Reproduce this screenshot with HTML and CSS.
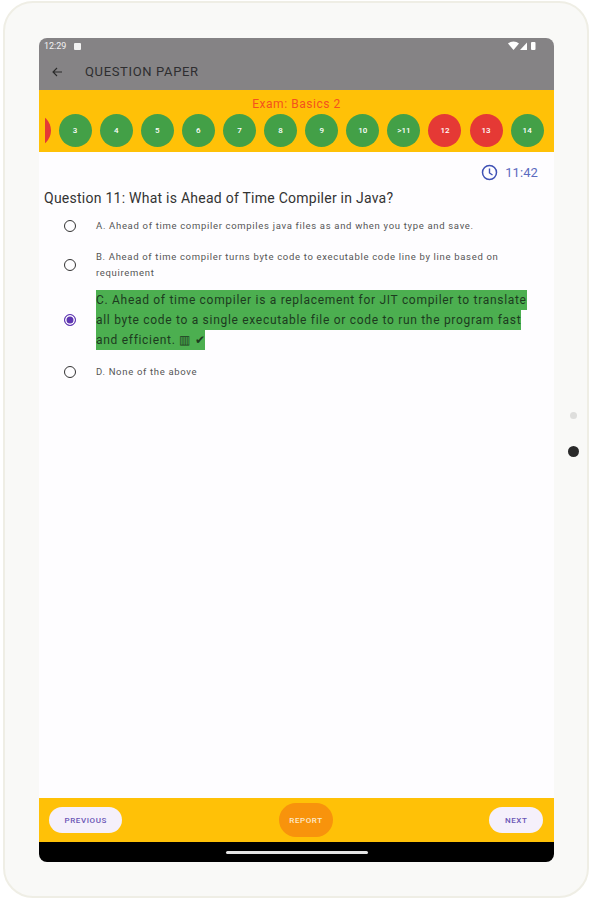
FILE: index.html
```html
<!DOCTYPE html>
<html lang="en">
  <head>
    <meta charset="UTF-8" />
    <meta name="viewport" content="width=device-width, initial-scale=1.0" />
    <title>Question Paper</title>
    <link rel="stylesheet" href="styles.css">
  </head>
  <body>
    <div class="tablet">
      <span class="side-dot light"></span>
      <span class="side-dot dark"></span>

      <div class="screen">
        <!-- App bar with status icons -->
        <div class="appbar">
          <div class="status">
            <div class="status-left">
              <span class="clock">12:29</span>
              <span class="notif"></span>
            </div>
            <svg class="status-icons" width="28" height="10" viewBox="0 0 28 10">
              <path d="M0 2.500C3-.3 8-.3 11 2.500L5.500 9z" fill="#fff" />
              <path d="M12 9L19 1.500V9z" fill="#fff" />
              <rect x="23" y="1" width="4.500" height="8" rx="1" fill="#fff" />
            </svg>
          </div>
          <div class="title-row">
            <svg class="back" width="12" height="12" viewBox="0 0 12 12">
              <path d="M11 6H2M6 2L2 6 6 10" fill="none" stroke="#2a2a2a" stroke-width="1.100" />
            </svg>
            <span class="title">QUESTION PAPER</span>
          </div>
        </div>

        <!-- Exam name and question numbers -->
        <div class="exam-bar">
          <div class="exam-name">Exam: Basics 2</div>
          <div class="numbers">
            <div class="track">
              <span class="num red"></span>
              <span class="num green">3</span>
              <span class="num green">4</span>
              <span class="num green">5</span>
              <span class="num green">6</span>
              <span class="num green">7</span>
              <span class="num green">8</span>
              <span class="num green">9</span>
              <span class="num green">10</span>
              <span class="num green">&gt;11</span>
              <span class="num red">12</span>
              <span class="num red">13</span>
              <span class="num green">14</span>
            </div>
          </div>
        </div>

        <!-- Question -->
        <div class="content">
          <div class="timer">
            <svg width="17" height="17" viewBox="0 0 17 17">
              <circle cx="8.500" cy="8.500" r="7" fill="none" stroke="#3f51b5" stroke-width="1.500" />
              <path d="M8.500 4.500V9l3 2" fill="none" stroke="#3f51b5" stroke-width="1.400" />
            </svg>
            <span>11:42</span>
          </div>
          <div class="question">Question 11: What is Ahead of Time Compiler in Java?</div>
          <div class="options">
            <div class="option one-line">
              <span class="radio"></span>
              <span class="option-text">A. Ahead of time compiler compiles java files as and when you type and save.</span>
            </div>
            <div class="option two-line">
              <span class="radio"></span>
              <span class="option-text">B. Ahead of time compiler turns byte code to executable code line by line based on requirement</span>
            </div>
            <div class="option correct">
              <span class="radio checked"></span>
              <span class="option-text"><mark>C. Ahead of time compiler is a replacement for JIT compiler to translate all byte code to a single executable file or code to run the program fast and efficient. ▥ ✔</mark></span>
            </div>
            <div class="option one-line">
              <span class="radio"></span>
              <span class="option-text">D. None of the above</span>
            </div>
          </div>
        </div>

        <!-- Bottom buttons -->
        <div class="footer">
          <button class="pill">PREVIOUS</button>
          <button class="report">REPORT</button>
          <button class="pill">NEXT</button>
        </div>
        <div class="navbar"><span class="home-bar"></span></div>
      </div>
    </div>
  </body>
</html>
```

FILE: styles.css
```css
* {
  margin: 0;
  padding: 0;
  box-sizing: border-box;
}

body {
  font-family: "Roboto", "Liberation Sans", sans-serif;
  background-color: #fff;
  width: 591px;
  height: 900px;
  padding: 1px 2px 2px 3px;
  overflow: hidden;
}

.tablet {
  position: relative;
  height: 897px;
  padding: 35px 33px 33px 34px;
  background-color: #f9f9f7;
  border: 2px solid #efeee5;
  border-radius: 30px;
}

.side-dot {
  position: absolute;
  border-radius: 50%;
}

.side-dot.light {
  left: 565px;
  top: 409px;
  width: 7px;
  height: 7px;
  background-color: #dededc;
}

.side-dot.dark {
  left: 563px;
  top: 443px;
  width: 11px;
  height: 11px;
  background-color: #2a2a2a;
}

.screen {
  display: flex;
  flex-direction: column;
  height: 824px;
  background-color: #fff;
  border-radius: 8px;
  overflow: hidden;
}

.appbar {
  height: 52px;
  flex-shrink: 0;
  background-color: #858385;
}

.status {
  display: flex;
  justify-content: space-between;
  align-items: center;
  height: 15px;
  padding: 1px 18px 0 5px;
}

.status-left {
  display: flex;
  align-items: center;
  gap: 8px;
}

.clock {
  font-size: 9px;
  color: #f2f2f2;
}

.notif {
  width: 7px;
  height: 7px;
  background-color: #f2f2f2;
  border-radius: 1px;
}

.title-row {
  display: flex;
  align-items: center;
  height: 37px;
  padding-left: 12px;
}

.title {
  margin-left: 22px;
  font-size: 13px;
  letter-spacing: 0.65px;
  color: #2e2e30;
}

.exam-bar {
  height: 62px;
  flex-shrink: 0;
  background-color: #ffc107;
}

.exam-name {
  padding-top: 7px;
  height: 24px;
  text-align: center;
  font-size: 12px;
  letter-spacing: 0.55px;
  color: #f4511e;
}

.numbers {
  margin-left: 6px;
  overflow: hidden;
}

.track {
  display: flex;
  gap: 8.1px;
  margin-left: -27.5px;
}

.num {
  display: flex;
  align-items: center;
  justify-content: center;
  flex-shrink: 0;
  width: 33px;
  height: 33px;
  border-radius: 50%;
  font-size: 8px;
  font-weight: 500;
  color: #fff;
}

.num.green {
  background-color: #43a047;
}

.num.red {
  background-color: #e53935;
}

.content {
  flex: 1;
  background-color: #fefdff;
}

.timer {
  display: flex;
  justify-content: flex-end;
  align-items: center;
  gap: 7px;
  height: 18px;
  margin-top: 11px;
  padding-right: 16px;
  font-size: 13px;
  letter-spacing: 0.1px;
  color: #5c6bc0;
}

.question {
  margin: 8px 0 0 5px;
  font-size: 14px;
  line-height: 18px;
  letter-spacing: 0.25px;
  color: #333;
}

.options {
  margin-top: 6px;
}

.option {
  display: flex;
  align-items: center;
  padding-left: 25px;
}

.option.one-line {
  height: 26px;
}

.option.two-line {
  height: 51px;
}

.option.correct {
  height: 60px;
  margin-bottom: 9px;
}

.radio {
  flex-shrink: 0;
  width: 12px;
  height: 12px;
  border: 1.500px solid #333;
  border-radius: 50%;
  margin-right: 20px;
}

.radio.checked {
  border-color: #5e35b1;
  background-color: #5e35b1;
  box-shadow: inset 0 0 0 1.500px #fff;
}

.option-text {
  width: 434px;
  font-size: 9.5px;
  line-height: 16px;
  letter-spacing: 0.68px;
  color: #555;
}

.correct .option-text {
  font-size: 12px;
  line-height: 20px;
  letter-spacing: 0.7px;
  color: #1d3b1f;
}

mark {
  background-color: #4caf50;
  color: inherit;
  padding: 3px 0;
}

.footer {
  display: flex;
  justify-content: space-between;
  align-items: center;
  height: 44px;
  flex-shrink: 0;
  padding: 0 11px 0 10px;
  background-color: #ffc107;
}

button {
  border: none;
  font-family: inherit;
  font-size: 8px;
  font-weight: 500;
  letter-spacing: 0.6px;
}

.pill {
  height: 26px;
  padding: 0 15.5px;
  border-radius: 13px;
  background-color: #f5f0fb;
  color: #6a55b5;
}

.report {
  height: 34px;
  padding: 0 10.5px;
  border-radius: 17px;
  background-color: #f8930c;
  color: #fdeacb;
}

.navbar {
  display: flex;
  justify-content: center;
  align-items: center;
  height: 20px;
  flex-shrink: 0;
  background-color: #000;
}

.home-bar {
  width: 142px;
  height: 3px;
  border-radius: 2px;
  background-color: #e4e4e4;
}
```
